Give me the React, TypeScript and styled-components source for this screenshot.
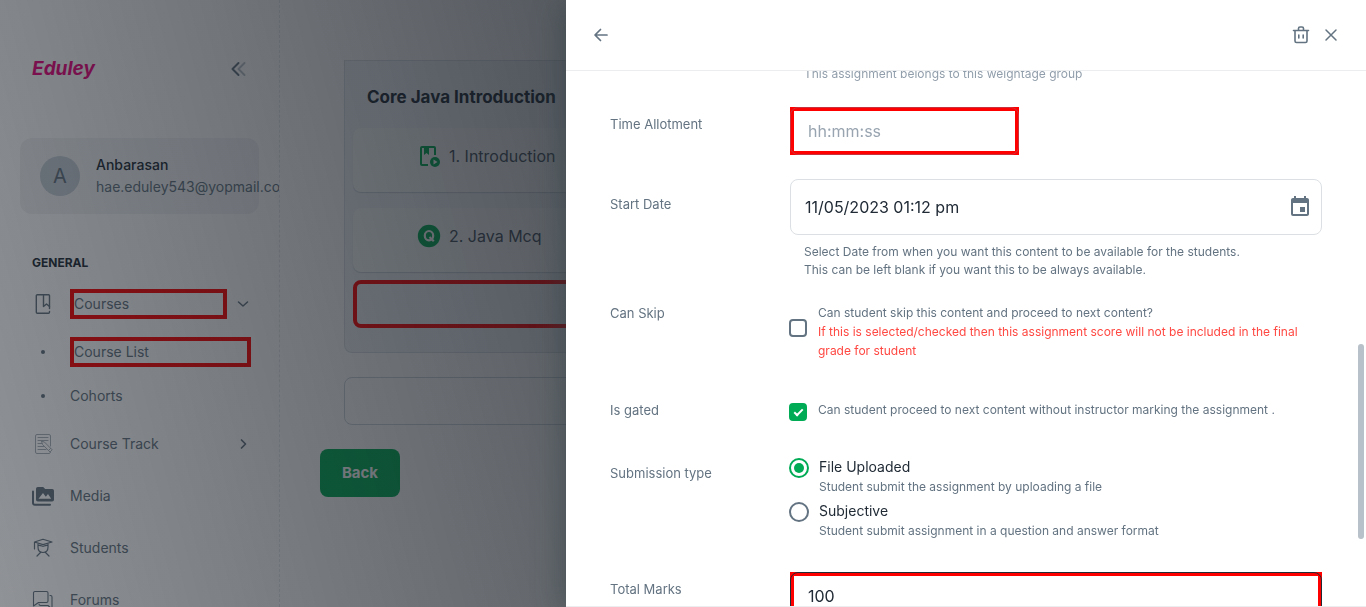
import React from 'react';
import styled, { createGlobalStyle, css } from 'styled-components';
import { MdEvent } from 'react-icons/md';

const GlobalStyle = createGlobalStyle`
  *, *::before, *::after { box-sizing: border-box; }
  body {
    margin: 0;
    background: #fff;
    color: #212b36;
    font-family: Inter, "Liberation Sans", sans-serif;
    font-size: 14px;
    line-height: 22px;
  }
  button, input { font: inherit; color: inherit; }
  p, h2, ul { margin: 0; padding: 0; }
  ul { list-style: none; }
  svg { display: block; flex-shrink: 0; }
`;

const red = '#ff0000';
const slate = '#637381';
const green = '#00ab55';

/* ---------- page behind the drawer ---------- */

const Shell = styled.div`
  display: flex;
  height: 100vh;
  overflow: hidden;
`;

const Sidebar = styled.aside`
  flex: 0 0 280px;
  border-right: 1px dashed rgba(145, 158, 171, 0.24);
  overflow: hidden;
`;

const Brand = styled.div`
  display: flex;
  align-items: center;
  justify-content: space-between;
  padding: 57px 28px 0 32px;
`;

const Logo = styled.a`
  color: #f0047f;
  font-family: Inter, sans-serif;
  font-size: 19px;
  font-style: italic;
  font-weight: 700;
  line-height: 24px;
  text-decoration: none;
`;

const IconButton = styled.button`
  display: flex;
  align-items: center;
  justify-content: center;
  padding: 0;
  border: 0;
  background: none;
  color: ${slate};
`;

const Account = styled.div`
  display: flex;
  align-items: center;
  gap: 16px;
  margin: 57px 20px 0;
  padding: 16px 20px;
  border-radius: 12px;
  background: rgba(145, 158, 171, 0.12);
`;

const Avatar = styled.div`
  display: flex;
  align-items: center;
  justify-content: center;
  flex: 0 0 40px;
  height: 40px;
  border-radius: 50%;
  background: #c4cdd5;
  color: ${slate};
  font-size: 20px;
`;

const AccountName = styled.p`
  font-size: 14px;
  font-weight: 500;
`;

const AccountMail = styled.p`
  color: ${slate};
  white-space: nowrap;
`;

const NavHeading = styled.h2`
  padding: 40px 32px 8px;
  font-size: 12px;
  font-weight: 700;
  line-height: 18px;
`;

const NavList = styled.ul`
  display: flex;
  flex-direction: column;
  gap: 4px;
`;

const NavLink = styled.a<{ $sub?: boolean }>`
  display: flex;
  align-items: center;
  height: ${(p) => (p.$sub ? 40 : 48)}px;
  padding: 0 28px 0 32px;
  color: ${slate};
  text-decoration: none;
`;

const NavIcon = styled.span`
  display: flex;
  justify-content: center;
  width: 22px;
  margin-right: 16px;
`;

const Dot = styled.span`
  width: 4px;
  height: 4px;
  border-radius: 50%;
  background: ${slate};
`;

const NavText = styled.span<{ $marked?: boolean }>`
  flex: 1;
  ${(p) => p.$marked && css`border: 4px solid ${red};`}
`;

const NavArrow = styled.span`
  margin-left: 8px;
`;

const Main = styled.main`
  flex: 1;
  min-width: 0;
  padding: 60px 40px 0;
`;

const Section = styled.section`
  margin: 0 24px;
  padding: 20px 8px 24px;
  border: 1px solid rgba(145, 158, 171, 0.24);
  border-radius: 0 0 8px 8px;
  background: #eff1f5;
`;

const SectionTitle = styled.h2`
  padding: 0 14px 15px;
  font-size: 17px;
  font-weight: 700;
  line-height: 32px;
`;

const Lesson = styled.a`
  display: flex;
  align-items: center;
  gap: 8px;
  height: 64px;
  margin-bottom: 16px;
  padding: 0 64px 8px;
  border-radius: 8px;
  background: #f7f8f9;
  box-shadow: 0 1px 1px rgba(145, 158, 171, 0.4);
  color: #47525e;
  font-size: 16px;
  text-decoration: none;
`;

const DropZone = styled.div<{ $marked?: boolean }>`
  height: 48px;
  border: 1px solid #ccd3d9;
  border-radius: 8px;
  ${(p) =>
    p.$marked
      ? css`border: 4px solid ${red}; margin-top: -8px;`
      : css`margin: 24px 24px;`}
`;

const BackButton = styled.button`
  width: 80px;
  height: 48px;
  border: 0;
  border-radius: 8px;
  background: ${green};
  color: #fff;
  font-size: 15px;
  font-weight: 700;
`;

const Backdrop = styled.div`
  position: fixed;
  inset: 0;
  background: linear-gradient(75deg, rgba(22, 28, 36, 0.48) 0%, rgb(22, 28, 36) 100%);
`;

/* ---------- drawer ---------- */

const Drawer = styled.div`
  position: fixed;
  top: 0;
  right: 0;
  bottom: 0;
  display: flex;
  flex-direction: column;
  width: 800px;
  max-width: 100%;
  background: #fff;
  box-shadow: -8px 4px 24px rgba(50, 66, 68, 0.4);
`;

const DrawerHeader = styled.header`
  display: flex;
  align-items: center;
  gap: 8px;
  flex: 0 0 71px;
  padding: 0 24px;
  border-bottom: 1px solid #ebedef;
`;

const Spacer = styled.div`
  flex: 1;
`;

const DrawerBody = styled.form`
  flex: 1;
  min-height: 0;
  overflow: hidden;
  padding: 0 44px;
  border-bottom: 1px solid #ebedef;
`;

const ScrollThumb = styled.div`
  position: absolute;
  top: 344px;
  right: 2px;
  width: 6px;
  height: 195px;
  border-radius: 3px;
  background: #b8c1c9;
`;

const Row = styled.div<{ $after?: number }>`
  display: grid;
  grid-template-columns: 180px minmax(0, 1fr);
  align-items: start;
  margin-bottom: ${(p) => p.$after ?? 24}px;
`;

const labelText = css<{ $drop?: number }>`
  padding-top: ${(p) => p.$drop ?? 0}px;
  color: ${slate};
  font-size: 13px;
  line-height: 20px;
`;

const Label = styled.label<{ $drop?: number }>`
  ${labelText}
`;

const GroupLabel = styled.span<{ $drop?: number }>`
  ${labelText}
`;

const Hint = styled.p<{ $tone?: 'light' }>`
  color: ${(p) => (p.$tone === 'light' ? '#919eab' : slate)};
  font-size: 12px;
  line-height: 18px;
`;

const GroupHint = styled(Hint)`
  grid-column: 2;
  margin-top: -6px;
  padding-left: 14px;
`;

const FieldHint = styled(Hint)`
  padding: 8px 14px 0;
`;

const MarkedField = styled.div<{ $width?: string; $line: string }>`
  position: relative;
  width: ${(p) => p.$width ?? '100%'};
  height: 48px;
  border: 4px solid ${red};
  &::after {
    content: '';
    position: absolute;
    inset: -4px;
    border: 1px solid ${(p) => p.$line};
    border-radius: 8px;
    pointer-events: none;
  }
`;

const TextInput = styled.input`
  width: 100%;
  height: 100%;
  padding: 0 14px;
  border: 0;
  outline: 0;
  background: none;
  font-size: 16px;
  &::placeholder { color: #98a4b0; opacity: 1; }
`;

const DateField = styled.div`
  display: flex;
  align-items: center;
  height: 56px;
  padding-right: 9px;
  border: 1px solid #dce0e4;
  border-radius: 8px;
`;

const Checkbox = styled.input`
  appearance: none;
  position: relative;
  flex: 0 0 18px;
  height: 18px;
  margin: 0;
  border: 2px solid ${slate};
  border-radius: 4px;
  &:checked { border-color: ${green}; background: ${green}; }
  &:checked::after {
    content: '';
    position: absolute;
    left: 5px;
    top: 2px;
    width: 5px;
    height: 9px;
    border: solid #fff;
    border-width: 0 2px 2px 0;
    transform: rotate(45deg);
  }
`;

const Choice = styled.label<{ $boxDrop: number }>`
  display: flex;
  align-items: flex-start;
  gap: 11px;
  min-height: 24px;
  margin-left: -1px;
  color: ${slate};
  font-size: 12px;
  line-height: 19px;
  ${Checkbox} { margin-top: ${(p) => p.$boxDrop}px; }
`;

const Warning = styled.span`
  display: block;
  color: #ff4842;
`;

const RadioList = styled.div`
  display: flex;
  flex-direction: column;
  gap: 4px;
  margin-left: -1px;
`;

const RadioOption = styled.label`
  display: grid;
  grid-template-columns: 20px 1fr;
  column-gap: 10px;
  font-size: 14px;
  line-height: 22px;
  ${Hint} { grid-column: 2; }
`;

const Radio = styled.input`
  appearance: none;
  width: 20px;
  height: 20px;
  margin: 2px 0 0;
  padding: 3px;
  border: 2px solid ${slate};
  border-radius: 50%;
  background-clip: content-box;
  &:checked { border-color: ${green}; background-color: ${green}; }
`;

/* ---------- icons ---------- */

type StrokeProps = { size?: number; width?: number; box?: number; children: React.ReactNode };

const Stroke = ({ size = 24, width = 1.5, box = 24, children }: StrokeProps) => (
  <svg
    width={size}
    height={size}
    viewBox={`0 0 ${box} ${box}`}
    fill="none"
    stroke="currentColor"
    strokeWidth={width}
    strokeLinecap="round"
    strokeLinejoin="round"
    aria-hidden="true"
  >
    {children}
  </svg>
);

const CollapseIcon = () => (
  <Stroke width={2}>
    <path d="M11.5 6 5.5 12l6 6" />
    <path d="M17.5 6l-6 6 6 6" opacity=".45" />
  </Stroke>
);

const BookIcon = () => (
  <Stroke size={22} box={22} width={1.4}>
    <path d="M17.5 15.5V2.7a1 1 0 0 0-1-1H5.3a1 1 0 0 0-1 1v16.6a1 1 0 0 0 1 1h11.2a1 1 0 0 0 1-1V18.5" />
    <path d="M11.5 2v11.5l3-2.5 3 2.5" />
  </Stroke>
);

const TrackIcon = () => (
  <Stroke size={22} box={22} width={1}>
    <g opacity=".55">
      <path d="M18.500 13V3a1.500 1.500 0 0 0-1.500-1.500H5A1.500 1.500 0 0 0 3.500 3v16A1.500 1.500 0 0 0 5 20.500h12a1.500 1.500 0 0 0 1.500-1.200" />
      <path d="M6 4.500h10M6 7.500h10M6 10.500h4M6 13.500h6M6 16.500h8" />
      <path d="m9.500 8.500 1 3 7.500 7.500 2.200-2.200-7.500-7.500zM16.500 17.500l2.200-2.200" />
    </g>
  </Stroke>
);

const MediaIcon = () => (
  <svg width="22" height="22" viewBox="0 0 22 22" aria-hidden="true">
    <path
      d="M1 6.500V18a1.700 1.700 0 0 0 1.700 1.700H18"
      fill="none"
      stroke="currentColor"
      strokeWidth="2"
      strokeLinecap="round"
    />
    <path
      fill="currentColor"
      fillRule="evenodd"
      d="M5.800 2h5.400l2 2h7A1.800 1.800 0 0 1 22 5.800v8.900a1.800 1.800 0 0 1-1.800 1.800H5.800A1.800 1.800 0 0 1 4 14.700V3.800A1.800 1.800 0 0 1 5.800 2zM6.500 13.800h12.700L16 9l-2.200 2.800L11 8z"
    />
  </svg>
);

const StudentIcon = () => (
  <Stroke size={22} box={22} width={1.2}>
    <path d="M11 2.300 20 5 11 7.600 2.500 5zM2.500 5v7" />
    <path d="M6 7.200V10c0 3.500 2 5.500 5 5.500s5-2 5-5.500V7.200M6 8.500c3-.5 4 .8 5 .8s2-1.300 5-.8" />
    <path d="M8.500 15.500 5 19M13.500 15.500 17 19" />
  </Stroke>
);

const ForumIcon = () => (
  <Stroke size={22} box={22} width={1.1}>
    <path d="M3 2.500h11.500a1.500 1.500 0 0 1 1.500 1.500v8a1.500 1.500 0 0 1-1.500 1.500H6.500L1.500 17V4A1.500 1.500 0 0 1 3 2.500z" />
    <path d="M18 6.500h.5A1.500 1.500 0 0 1 20 8v12l-4-3.500H8.500A1.500 1.500 0 0 1 7 15" />
  </Stroke>
);

const ChevronDown = () => (
  <Stroke size={16} box={16}><path d="m3.500 6 4.500 4 4.500-4" /></Stroke>
);

const ChevronRight = () => (
  <Stroke size={16} box={16} width={1.7}><path d="m6.500 4 4 4-4 4" /></Stroke>
);

const LessonIcon = () => (
  <svg width="24" height="24" viewBox="0 0 24 24" fill="none" aria-hidden="true">
    <path d="M18 11V4a1 1 0 0 0-1-1H5a1 1 0 0 0-1 1v16a1 1 0 0 0 1 1h6" stroke={green} strokeWidth="2" />
    <path d="M7 3h5v8l-2.500-2L7 11z" fill={green} />
    <circle cx="18" cy="18" r="5" fill={green} />
    <path d="M16.500 15.500v5l4-2.500z" fill="#fff" />
  </svg>
);

const QuizIcon = () => (
  <svg width="24" height="24" viewBox="0 0 24 24" fill="none" aria-hidden="true">
    <circle cx="12" cy="12" r="11.200" fill={green} />
    <ellipse cx="12" cy="11.700" rx="4.200" ry="4.700" stroke="#fff" strokeWidth="2.200" />
    <path d="m12.500 13 4.300 4.200" stroke="#fff" strokeWidth="2.200" />
  </svg>
);

const BackArrow = () => (
  <Stroke size={22} box={22} width={1.7}><path d="M17 11H5.500M10.500 5.500 5 11l5.500 5.500" /></Stroke>
);

const TrashIcon = () => (
  <Stroke size={22} box={22} width={1.6}>
    <path d="M3.500 6.500h15M5 6.500V17a1.500 1.500 0 0 0 1.500 1.500h9A1.500 1.500 0 0 0 17 17V6.500M8.500 6V4.500A1.500 1.500 0 0 1 10 3h2a1.500 1.500 0 0 1 1.500 1.500V6M8.800 11v3M13.200 11v3" />
  </Stroke>
);

const CloseIcon = () => (
  <Stroke size={22} box={22}><path d="m6 6 10 10M16 6 6 16" /></Stroke>
);

type NavEntry = {
  text: string;
  icon?: React.ReactNode;
  arrow?: React.ReactNode;
  marked?: boolean;
};

const navEntries: NavEntry[] = [
  { text: 'Courses', icon: <BookIcon />, arrow: <ChevronDown />, marked: true },
  { text: 'Course List', marked: true },
  { text: 'Cohorts' },
  { text: 'Course Track', icon: <TrackIcon />, arrow: <ChevronRight /> },
  { text: 'Media', icon: <MediaIcon /> },
  { text: 'Students', icon: <StudentIcon /> },
  { text: 'Forums', icon: <ForumIcon /> },
];

export default function App() {
  return (
    <>
      <GlobalStyle />
      <Shell>
        <Sidebar>
          <Brand>
            <Logo href="#home">Eduley</Logo>
            <IconButton type="button" aria-label="Collapse menu"><CollapseIcon /></IconButton>
          </Brand>
          <Account>
            <Avatar>A</Avatar>
            <div>
              <AccountName>Anbarasan</AccountName>
              <AccountMail>hae.eduley543@yopmail.com</AccountMail>
            </div>
          </Account>
          <NavHeading>GENERAL</NavHeading>
          <NavList>
            {navEntries.map((entry) => (
              <li key={entry.text}>
                <NavLink href="#nav" $sub={!entry.icon}>
                  <NavIcon>{entry.icon ?? <Dot />}</NavIcon>
                  <NavText $marked={entry.marked}>{entry.text}</NavText>
                  {entry.arrow && <NavArrow>{entry.arrow}</NavArrow>}
                </NavLink>
              </li>
            ))}
          </NavList>
        </Sidebar>
        <Main>
          <Section>
            <SectionTitle>Core Java Introduction</SectionTitle>
            <Lesson href="#lesson"><LessonIcon />1. Introduction</Lesson>
            <Lesson href="#quiz"><QuizIcon />2. Java Mcq</Lesson>
            <DropZone $marked />
          </Section>
          <DropZone />
          <BackButton type="button">Back</BackButton>
        </Main>
      </Shell>
      <Backdrop />
      <Drawer role="dialog" aria-label="Assignment">
        <DrawerHeader>
          <IconButton type="button" aria-label="Back"><BackArrow /></IconButton>
          <Spacer />
          <IconButton type="button" aria-label="Delete"><TrashIcon /></IconButton>
          <IconButton type="button" aria-label="Close"><CloseIcon /></IconButton>
        </DrawerHeader>
        <DrawerBody>
          <Row>
            <GroupHint $tone="light">This assignment belongs to this weightage group</GroupHint>
          </Row>
          <Row>
            <Label htmlFor="time" $drop={7}>Time Allotment</Label>
            <MarkedField $width="229px" $line="#c8323c">
              <TextInput id="time" placeholder="hh:mm:ss" />
            </MarkedField>
          </Row>
          <Row>
            <Label htmlFor="start" $drop={15}>Start Date</Label>
            <div>
              <DateField>
                <TextInput id="start" defaultValue="11/05/2023 01:12 pm" />
                <IconButton type="button" aria-label="Choose date"><MdEvent size={24} /></IconButton>
              </DateField>
              <FieldHint>
                Select Date from when you want this content to be available for the students.
                <br />
                This can be left blank if you want this to be always available.
              </FieldHint>
            </div>
          </Row>
          <Row $after={40}>
            <Label htmlFor="skip">Can Skip</Label>
            <Choice $boxDrop={16}>
              <Checkbox id="skip" type="checkbox" />
              <span>
                Can student skip this content and proceed to next content?
                <Warning>
                  If this is selected/checked then this assignment score will not be included in the final
                  grade for student
                </Warning>
              </span>
            </Choice>
          </Row>
          <Row $after={32}>
            <Label htmlFor="gated">Is gated</Label>
            <Choice $boxDrop={3}>
              <Checkbox id="gated" type="checkbox" defaultChecked />
              <span>Can student proceed to next content without instructor marking the assignment .</span>
            </Choice>
          </Row>
          <Row $after={32}>
            <GroupLabel id="submission" $drop={7}>Submission type</GroupLabel>
            <RadioList role="radiogroup" aria-labelledby="submission">
              <RadioOption>
                <Radio type="radio" name="submission" defaultChecked />
                File Uploaded
                <Hint as="span">Student submit the assignment by uploading a file</Hint>
              </RadioOption>
              <RadioOption>
                <Radio type="radio" name="submission" />
                Subjective
                <Hint as="span">Student submit assignment in a question and answer format</Hint>
              </RadioOption>
            </RadioList>
          </Row>
          <Row>
            <Label htmlFor="marks" $drop={7}>Total Marks</Label>
            <MarkedField $line="#212b36">
              <TextInput id="marks" defaultValue="100" />
            </MarkedField>
          </Row>
        </DrawerBody>
        <ScrollThumb />
      </Drawer>
    </>
  );
}
